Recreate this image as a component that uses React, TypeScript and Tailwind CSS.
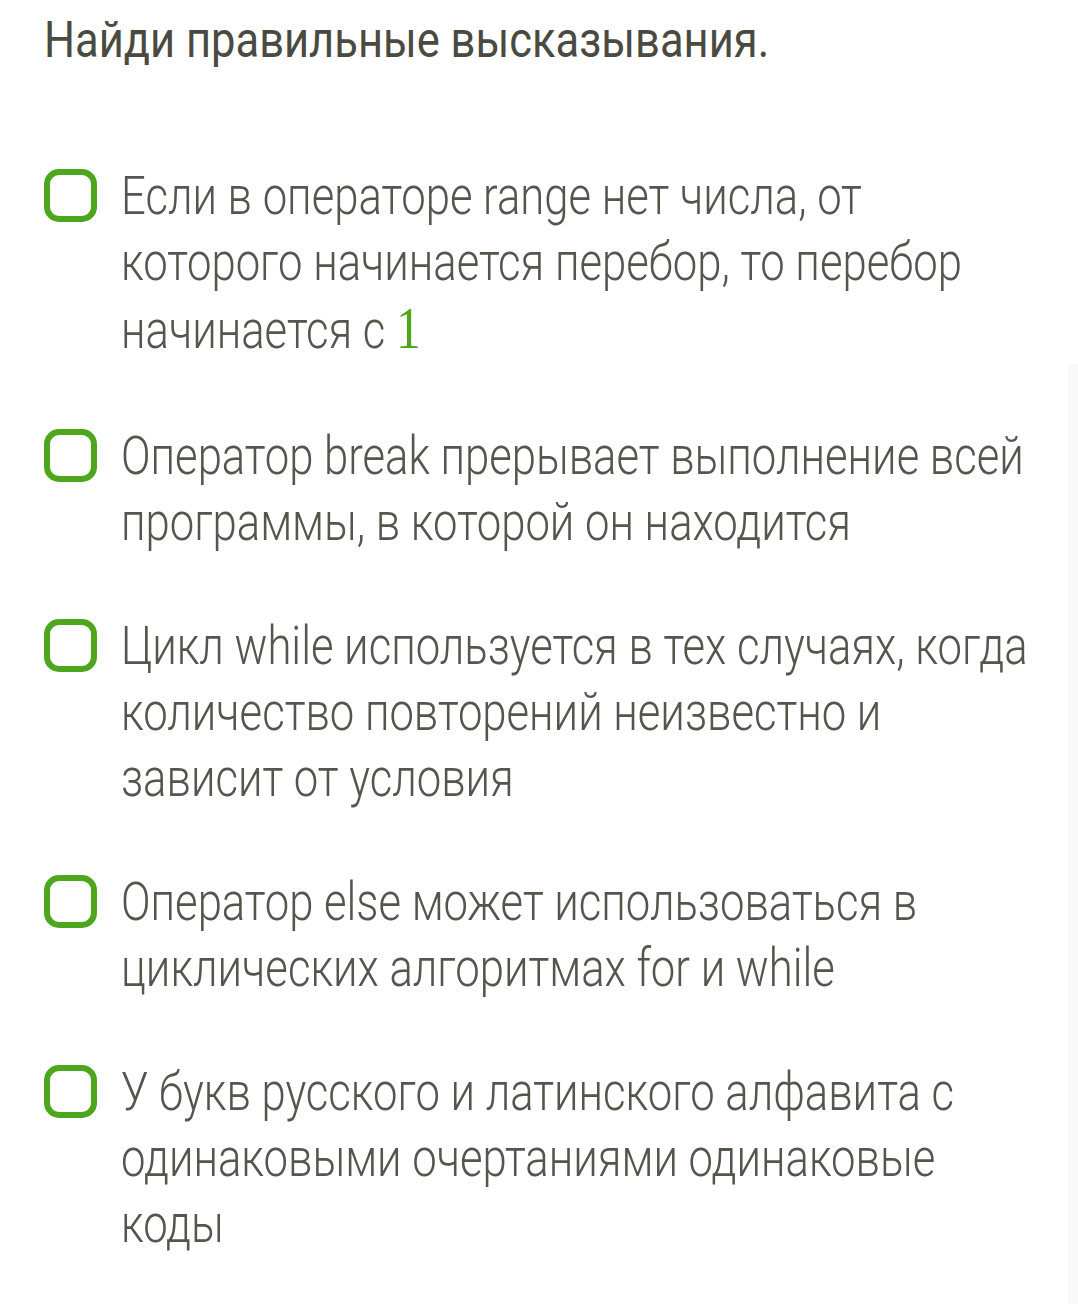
import type { ReactNode } from 'react'

type Item = { lines: ReactNode[] }

const ITEMS: Item[] = [
  {
    lines: [
      'Если в операторе range нет числа, от',
      'которого начинается перебор, то перебор',
      <>
        начинается с{' '}
        <span className="font-['Liberation_Serif',serif] text-[60px] leading-none font-normal text-[#4ea61d]">1</span>
      </>,
    ],
  },
  { lines: ['Оператор break прерывает выполнение всей', 'программы, в которой он находится'] },
  {
    lines: [
      'Цикл while используется в тех случаях, когда',
      'количество повторений неизвестно и',
      'зависит от условия',
    ],
  },
  { lines: ['Оператор else может использоваться в', 'циклических алгоритмах for и while'] },
  {
    lines: [
      'У букв русского и латинского алфавита с',
      'одинаковыми очертаниями одинаковые',
      'коды',
    ],
  },
]

function Checkbox() {
  return (
    <span className="mt-[6px] block h-[53px] w-[53px] shrink-0 rounded-[15px] border-[6px] border-[#4ea61d] bg-white" />
  )
}

export default function App() {
  return (
    <div className="relative min-h-[1304px] overflow-hidden bg-white font-['Roboto',sans-serif]">
      <div className="pl-[44px] pt-[10px]">
        <h1 className="origin-left scale-x-[0.87] whitespace-nowrap text-[50px] leading-[60px] font-normal text-[#4a4a40]">
          Найди правильные высказывания.
        </h1>
      </div>

      <ul className="mt-[93px] flex flex-col gap-[58px]">
        {ITEMS.map((item, i) => (
          <li key={i} className="flex items-start pl-[44px]">
            <Checkbox />
            <div className="ml-[24px] origin-left scale-x-[0.823] whitespace-nowrap text-[53px] font-light text-[#55554d]">
              {item.lines.map((line, j) => (
                <div
                  key={j}
                  className={i === 0 && j === 2 ? 'leading-[70px]' : 'leading-[66px]'}
                >
                  {line}
                </div>
              ))}
            </div>
          </li>
        ))}
      </ul>

      {/* faint scroll track on the right edge */}
      <div className="absolute top-[364px] right-0 bottom-0 w-[10px] bg-[#f9f9f9]" />
    </div>
  )
}
